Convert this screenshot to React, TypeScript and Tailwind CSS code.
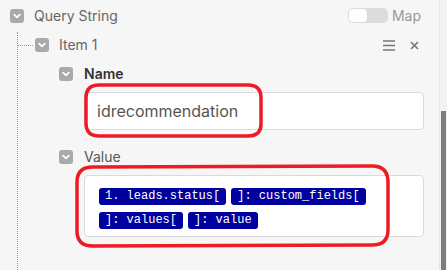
import React from 'react';

const Chevron = () => (
    <div className="flex h-[14px] w-[14px] shrink-0 items-center justify-center rounded-[3px] bg-[#a9a9a9]">
        <svg width="14" height="14" viewBox="0 0 14 14" fill="none">
            <path d="M4.2 5.6 L7 8.4 L9.8 5.6" stroke="#fff" strokeWidth="1.8" strokeLinecap="round" strokeLinejoin="round" />
        </svg>
    </div>
);

const tags = ['1. leads.status[', ']: custom_fields[', ']: values[', ']: value'];

export default function App() {
    return (
        <div className="relative flex h-[270px] w-[447px] overflow-hidden bg-[#f6f6f6] font-['Inter',sans-serif]">
            <div className="flex-1">
                {/* header */}
                <div className="mt-[8px] flex h-[15px] items-center pl-[10px] pr-[18px]">
                    <Chevron />
                    <span className="ml-[10px] text-[14px] leading-none text-[#666]">Query String</span>
                    <div className="ml-auto flex items-center">
                        <div className="h-[15px] w-[40px] rounded-[5px] bg-[#dcdcdc] p-[1px]">
                            <div className="h-full w-[18px] rounded-[4px] bg-white" />
                        </div>
                        <span className="ml-[4px] text-[14px] leading-none text-[#999]">Map</span>
                    </div>
                </div>

                {/* tree */}
                <div className="ml-[17px] mt-[9px] h-[260px] border-l border-dotted border-[#9a9a9a] pt-[6px]">
                    <div className="flex h-[14px] items-center pr-[20px]">
                        <div className="w-[15px] border-t border-dotted border-[#9a9a9a]" />
                        <div className="ml-[2px]"><Chevron /></div>
                        <span className="ml-[10px] text-[14px] leading-none text-[#666]">Item 1</span>
                        <div className="ml-auto flex items-center gap-[15px]">
                            <svg width="12" height="11" viewBox="0 0 12 11">
                                <path d="M0 1 H12 M0 5.5 H12 M0 10 H12" stroke="#777" strokeWidth="1.6" />
                            </svg>
                            <svg width="9" height="9" viewBox="0 0 9 9">
                                <path d="M1 1 L8 8 M8 1 L1 8" stroke="#777" strokeWidth="1.7" />
                            </svg>
                        </div>
                    </div>

                    <div className="ml-[41px] mt-[15px] flex h-[14px] items-center">
                        <Chevron />
                        <span className="ml-[11px] text-[14px] font-semibold leading-none text-[#333]">Name</span>
                    </div>
                    <div className="ml-[66px] mr-[15px] mt-[11px] flex h-[38px] items-center rounded-[4px] border border-[#dadada] bg-white px-[12px]">
                        <span className="text-[16px] text-[#555]">idrecommendation</span>
                    </div>

                    <div className="ml-[41px] mt-[20px] flex h-[14px] items-center">
                        <Chevron />
                        <span className="ml-[11px] text-[14px] leading-none text-[#555]">Value</span>
                    </div>
                    <div className="ml-[66px] mr-[15px] mt-[11px] flex flex-wrap gap-x-[5px] gap-y-[7px] rounded-[4px] border border-[#dadada] bg-white pb-[7px] pl-[14px] pr-[14px] pt-[12px]">
                        {tags.map((t) => (
                            <span key={t} className="h-[17px] whitespace-pre rounded-[3px] bg-[#00009f] px-[6px] font-['Liberation_Mono',monospace] text-[12px] leading-[17px] text-white">
                                {t}
                            </span>
                        ))}
                    </div>
                </div>
            </div>

            {/* scrollbar */}
            <div className="w-[8px] border-l border-[#e6e6e6] bg-[#f3f3f3]">
                <div className="ml-[1px] mt-[111px] h-[200px] w-[5px] bg-[#7d7d7d]" />
            </div>

            {/* red annotations */}
            <svg className="pointer-events-none absolute left-0 top-0" width="447" height="270" viewBox="0 0 447 270" fill="none">
                <path d="M99 85 L248 85 Q261 85 261 98 L261 124 Q261 136 248 136 L99 136 Q86 136 86 123 L86 98 Q86 85 99 85 Z" stroke="#ed1c24" strokeWidth="3.5" />
                <path d="M93 167 L372 166 Q388 166 388 182 L388 230 Q388 245 372 245 L93 246 Q77 246 77 231 L77 182 Q77 167 93 167 Z" stroke="#ed1c24" strokeWidth="3.5" />
            </svg>
        </div>
    );
}
